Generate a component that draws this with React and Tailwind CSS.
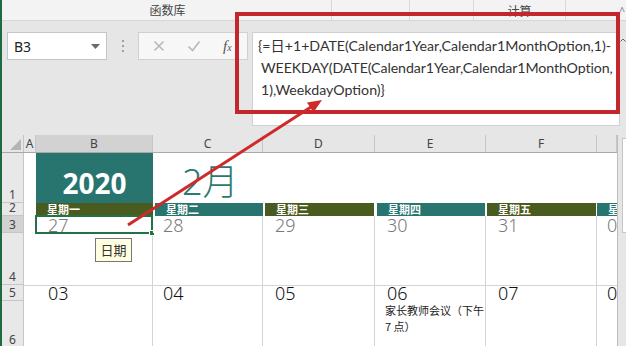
import React from "react"

const font = "font-['Noto_Sans','Noto_Sans_CJK_SC',sans-serif]"

const colW = ["w-[12px]", "w-[117px]", "w-[110px]", "w-[112px]", "w-[111px]", "w-[111px]", "w-[20px]"]
const colNames = ["A", "B", "C", "D", "E", "F", ""]

const weekdays = [
  { label: "星期一", bg: "bg-[#4a5b20]", w: "w-[117px]", ml: "ml-0" },
  { label: "星期二", bg: "bg-[#287570]", w: "w-[108px]", ml: "ml-[2px]" },
  { label: "星期三", bg: "bg-[#4a5b20]", w: "w-[109px]", ml: "ml-[2px]" },
  { label: "星期四", bg: "bg-[#287570]", w: "w-[108px]", ml: "ml-[3px]" },
  { label: "星期五", bg: "bg-[#4a5b20]", w: "w-[109px]", ml: "ml-[2px]" },
  { label: "星", bg: "bg-[#287570]", w: "w-[20px]", ml: "ml-[1px]" },
]

const row3 = ["27", "28", "29", "30", "31", "0"]
const row5 = ["03", "04", "05", "06", "07", "0"]

function RowHead({ n, h, active }) {
  return (
    <div className={`w-[22px] ${h} shrink-0 flex items-end justify-center border-b border-r border-[#c6c6c6] text-[12px] leading-[15px] text-[#444] ${active ? "bg-[#d2d2d2]" : "bg-[#e8e8e8]"}`}>
      {n}
    </div>
  )
}

function DateRow({ items, color, h, top }) {
  return (
    <div className={`flex ${h}`}>
      <RowHead n={top ? "5" : "3"} h={h} active={!top} />
      <div className={`w-[12px] bg-white ${top ? "border-t border-[#d4d4d4]" : ""}`} />
      {items.map((d, i) => (
        <div key={i} className={`${colW[i + 1]} relative bg-white ${i < 5 ? "border-r border-[#d4d4d4]" : ""} ${top ? "border-t border-[#d4d4d4]" : ""}`}>
          <span className={`absolute ${top ? "top-[-3px]" : "top-[-1px]"} ${i === 1 || i === 5 ? "left-[10px]" : "left-[12px]"} text-[18px] leading-[20px] font-light ${color}`}>{d}</span>
          {!top && i === 0 && (
            <div className="absolute -left-px -top-px -right-px -bottom-px border-2 border-[#217346]">
              <div className="absolute -right-[4px] -bottom-[4px] w-[6px] h-[6px] bg-[#217346] border border-white" />
            </div>
          )}
        </div>
      ))}
    </div>
  )
}

export default function App() {
  return (
    <div className={`w-[626px] h-[346px] overflow-hidden relative flex bg-[#e6e6e6] ${font}`}>
      <div className="w-[2px] shrink-0 bg-[#1f6b41]" />
      <div className="flex-1 flex flex-col">
        {/* ribbon group labels */}
        <div className="h-[21px] shrink-0 flex bg-[#f3f3f3] border-b border-[#d6d6d6] text-[12px] text-[#444] leading-[22px]">
          <div className="w-[329px] text-center pl-[2px]">函数库</div>
          <div className="w-[78px] border-l border-[#d8d8d8]" />
          <div className="w-[64px] border-l border-[#d8d8d8]" />
          <div className="w-[92px] border-l border-[#d8d8d8] text-center pt-[1px]">计算</div>
          <div className="flex-1 border-l border-[#d8d8d8] flex justify-end pr-[1px]">
            <span className="text-[10px] text-[#777]">^</span>
          </div>
        </div>

        {/* formula bar */}
        <div className="h-[114px] shrink-0 flex items-start pt-[11px]">
          <div className="ml-[5px] w-[100px] h-[28px] bg-white border border-[#c6c6c6] flex items-center justify-between px-[6px]">
            <span className="text-[14px] text-[#222]">B3</span>
            <svg width="9" height="5" viewBox="0 0 9 5"><path d="M0 0h9L4.5 5z" fill="#6a6a6a" /></svg>
          </div>
          <div className="w-[31px] h-[28px] flex flex-col items-center justify-center gap-[3px]">
            <div className="w-[2px] h-[2px] bg-[#a0a0a0]" />
            <div className="w-[2px] h-[2px] bg-[#a0a0a0]" />
            <div className="w-[2px] h-[2px] bg-[#a0a0a0]" />
          </div>
          <div className="w-[110px] h-[28px] bg-[#f7f7f7] border border-[#d0d0d0] flex items-center">
            <svg className="ml-[14px]" width="12" height="12" viewBox="0 0 12 12"><path d="M1.5 1.5l9 9M10.5 1.5l-9 9" stroke="#b8b8b8" strokeWidth="1.6" /></svg>
            <svg className="ml-[22px]" width="14" height="12" viewBox="0 0 14 12"><path d="M1.5 6.5l4 4 7-9" stroke="#b8b8b8" strokeWidth="1.6" fill="none" /></svg>
            <span className="ml-[22px] font-['Liberation_Serif',serif] italic text-[15px] text-[#555] leading-none">f<span className="text-[10px]">x</span></span>
          </div>
          <div className="ml-[4px] w-[368px] h-[94px] bg-white border border-[#d0d0d0] pl-[5px] pt-[2px] text-[14.2px] leading-[22px] text-[#333] font-['Lato','Noto_Sans_CJK_SC',sans-serif]">
            <div className="whitespace-nowrap">{"{=日+1+DATE(Calendar1Year,Calendar1MonthOption,1)-"}</div>
            <div className="whitespace-nowrap pl-[3px] tracking-[-0.1px]">WEEKDAY(DATE(Calendar1Year,Calendar1MonthOption,</div>
            <div className="whitespace-nowrap pl-[3px]">{"1),WeekdayOption)}"}</div>
          </div>
          <div className="flex-1 flex justify-center pt-[6px]">
            <svg width="6" height="4" viewBox="0 0 6 4"><path d="M0.5 3.5L3 1l2.5 2.5" stroke="#666" fill="none" /></svg>
          </div>
        </div>

        {/* sheet */}
        <div className="flex-1 flex">
          <div className="w-[615px] flex flex-col bg-white">
            {/* column headers */}
            <div className="flex h-[18px] bg-[#e6e6e6] border-b border-[#a9a9a9]">
              <div className="w-[22px] relative border-r border-[#c6c6c6]">
                <svg className="absolute right-[2px] bottom-[2px]" width="11" height="11" viewBox="0 0 11 11"><path d="M11 0v11H0z" fill="#b5b5b5" /></svg>
              </div>
              {colNames.map((c, i) => (
                <div key={i} className={`${colW[i]} flex items-center justify-center text-[12px] text-[#444] border-r border-[#c6c6c6] ${i === 1 ? "bg-[#d2d2d2]" : ""}`}>
                  {c}
                </div>
              ))}
            </div>

            {/* row 1 */}
            <div className="flex h-[50px]">
              <RowHead n="1" h="h-[50px]" />
              <div className="w-[12px]" />
              <div className="w-[117px] bg-[#287570] flex items-center justify-center pt-[10px]">
                <span className="text-[28px] font-bold text-white leading-none">2020</span>
              </div>
              <div className="w-[110px] relative">
                <span className="absolute left-[29px] top-[7px] text-[36px] leading-[44px] font-light text-[#2a7a73] whitespace-nowrap">2月</span>
              </div>
            </div>

            {/* row 2 weekdays */}
            <div className="flex h-[13px]">
              <RowHead n="2" h="h-[13px]" />
              <div className="w-[12px]" />
              {weekdays.map((w, i) => (
                <div key={i} className={`${w.w} ${w.ml} ${w.bg} h-[13px] pl-[11px] text-[11px] leading-[13px] font-bold text-white overflow-hidden whitespace-nowrap`}>
                  {w.label}
                </div>
              ))}
            </div>

            {/* row 3 */}
            <DateRow items={row3} color="text-[#7a7a7a]" h="h-[17px]" />

            {/* row 4 */}
            <div className="flex h-[52px]">
              <RowHead n="4" h="h-[52px]" />
              <div className="w-[12px]" />
              {[1, 2, 3, 4, 5, 6].map((i) => (
                <div key={i} className={`${colW[i]} ${i < 6 ? "border-r border-[#d4d4d4]" : ""}`} />
              ))}
            </div>

            {/* row 5 */}
            <DateRow items={row5} color="text-[#111]" h="h-[16px]" top />

            {/* row 6 */}
            <div className="flex h-[47px]">
              <RowHead n="6" h="h-[47px]" />
              <div className="w-[12px]" />
              {[1, 2, 3, 4, 5, 6].map((i) => (
                <div key={i} className={`${colW[i]} ${i < 6 ? "border-r border-[#d4d4d4]" : ""}`}>
                  {i === 4 && (
                    <div className="pl-[10px] pt-[1px] text-[11px] leading-[16px] text-[#222] font-['Noto_Sans_CJK_SC',sans-serif]">
                      <div>家长教师会议（下午</div>
                      <div>7 点）</div>
                    </div>
                  )}
                </div>
              ))}
            </div>
          </div>
          <div className="flex-1 border-l border-[#bdbdbd] bg-[#e6e6e6] pt-[3px] pl-[4px]">
            <div className="h-[95px] bg-white border border-[#c6c6c6] border-r-0" />
          </div>
        </div>
      </div>

      {/* callout box around formula */}
      <div className="absolute left-[235px] top-[12px] w-[385px] h-[102px] border-[4px] border-[#c3262d]" />

      {/* tooltip */}
      <div className="absolute left-[95px] top-[238px] w-[37px] h-[24px] bg-[#ffffe1] border border-[#767676] flex items-center justify-center text-[13px] text-[#333] font-['Noto_Sans_CJK_SC',sans-serif]">
        日期
      </div>

      {/* arrow */}
      <svg className="absolute inset-0 pointer-events-none" width="626" height="346" viewBox="0 0 626 346">
        <line x1="128" y1="225" x2="311" y2="107" stroke="#cf2a2a" strokeWidth="3" />
        <polygon points="322,100 313.4,112.6 307,102.6" fill="#cf2a2a" />
      </svg>
    </div>
  )
}
